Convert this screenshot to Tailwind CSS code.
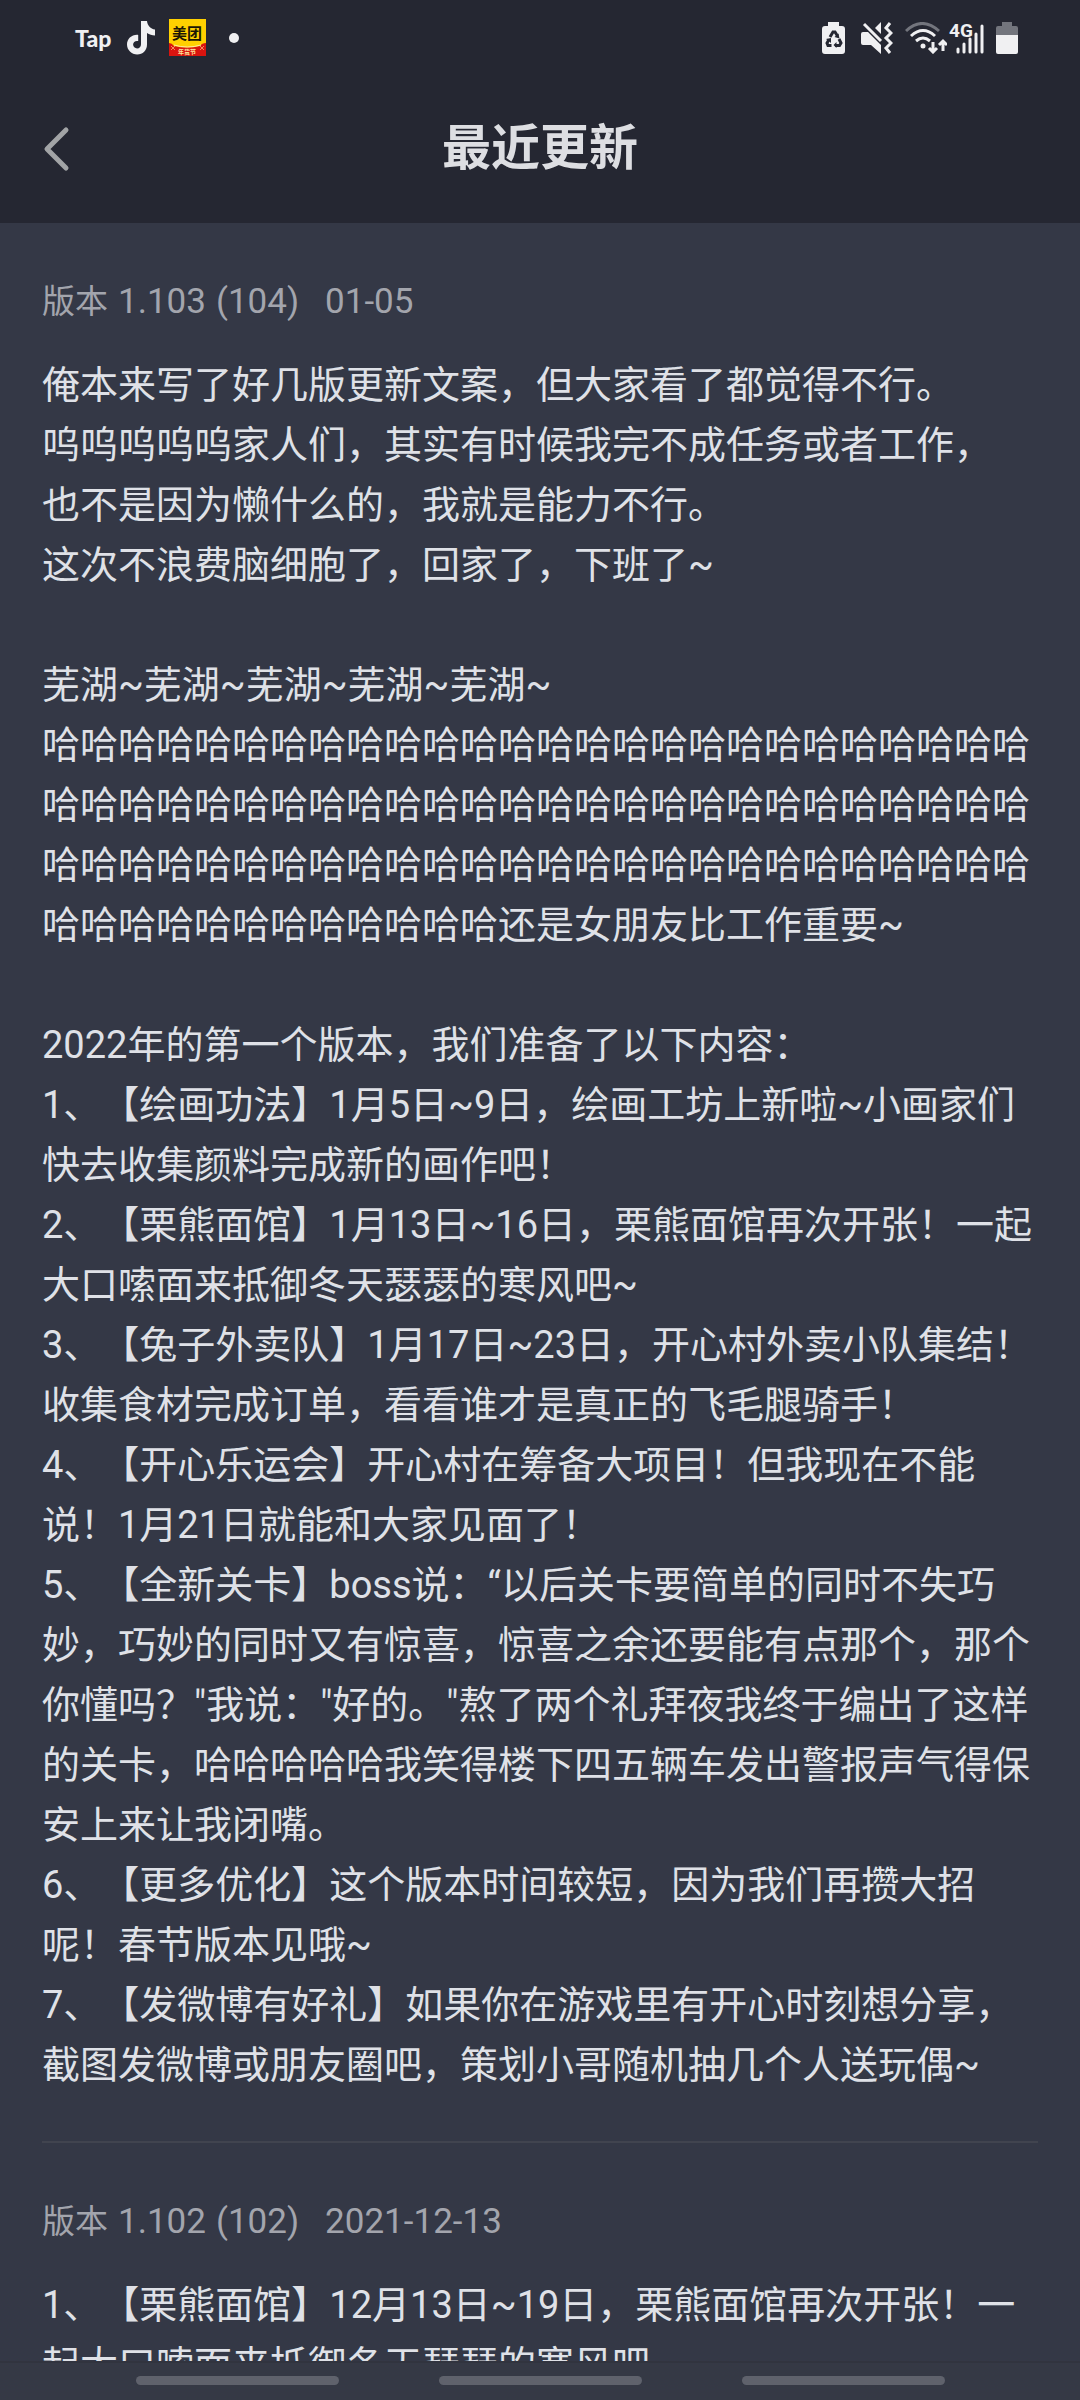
<!DOCTYPE html>
<html lang="zh-CN">
<head>
    <meta charset="UTF-8">
    <meta name="viewport" content="width=device-width, initial-scale=1.0">
    <title>最近更新</title>
    <script src="https://cdn.jsdelivr.net/npm/@tailwindcss/browser@4"></script>
</head>
<body class="bg-[#343846] font-['Roboto','Noto_Sans_CJK_SC',sans-serif] [text-spacing-trim:space-all]">
    <div class="flex flex-col h-screen overflow-hidden">

        <!-- status bar -->
        <div class="flex justify-between items-center shrink-0 h-[75px] pl-[75px] pr-[62px] bg-[#252732] text-[#f0f0f2]">
            <div class="flex items-center">
                <span class="w-[52px] text-[23px] leading-6 font-black font-['Lato',sans-serif]">Tap</span>
                <svg class="w-7 h-[34px]" viewBox="0 0 28 34" fill="currentColor">
                    <path d="M14 0h6c.5 4.500 3.500 8 8 8.500v6c-3 0-5.700-1-8-2.500v11.500C20 29.500 15.800 33.500 10.200 33.500S0 29.200 0 23.600c0-5.900 4.900-10.300 11.200-9.700v6.200c-2.700-.7-5.100.9-5.100 3.500 0 2.200 1.800 3.900 4 3.900 2.300 0 3.900-1.700 3.900-4.200z"/>
                </svg>
                <svg class="w-[37px] h-[37px] ml-[14px]" viewBox="0 0 37 37">
                    <rect width="37" height="37" fill="#ffd000"/>
                    <path d="M0 24q3 0 5 3q13 3 26 0q2-3 6-3v13H0z" fill="#d9140f"/>
                    <path d="M2 27l4 4M6 27l-4 4M35 27l-4 4M31 27l4 4" stroke="#f58a5a" stroke-width="1"/>
                    <path d="M5 26q13 4 27 0" fill="none" stroke="#ffe9a0" stroke-width="1"/>
                    <text x="18" y="20" text-anchor="middle" font-size="15" font-weight="700" fill="#1c1605">美团</text>
                    <text x="18" y="35" text-anchor="middle" font-size="6" font-weight="700" fill="#ffe9a0">年货节</text>
                </svg>
                <span class="w-[10px] h-[10px] ml-[23px] rounded-full bg-[#f0f0f2]"></span>
            </div>
            <div class="flex items-center">
                <svg class="w-6 h-8" viewBox="0 0 24 32" fill="currentColor">
                    <path d="M6 0h11v4h3a3 3 0 0 1 3 3v22a3 3 0 0 1-3 3H3a3 3 0 0 1-3-3V7a3 3 0 0 1 3-3h3z"/>
                    <g fill="none" stroke="#252732" stroke-width="3">
                        <path d="M8 15l3-5h2l2.500 4M17 17l2 4-1.500 2.500H13M9.500 23.500H6L5 21l2-3.500"/>
                    </g>
                    <path d="M16.500 11.500l1 5-5-1.500zM14.500 20v6l-3-3zM4 17l5-1v5z" fill="#252732"/>
                </svg>
                <svg class="w-8 h-8 ml-[15px]" viewBox="0 0 32 32" fill="currentColor">
                    <path d="M0 12a2 2 0 0 1 2-2h5l13 13v9l-10-9H2a2 2 0 0 1-2-2z"/>
                    <path d="M3 2l17 17" stroke="currentColor" stroke-width="3"/>
                    <path d="M20 0v12l-6-6z"/>
                    <path d="M29 1l-4 5 5 5-5 5 5 5-5 5 4 5" fill="none" stroke="currentColor" stroke-width="3"/>
                </svg>
                <svg class="w-[42px] h-8 ml-3" viewBox="0 0 42 32" fill="none" stroke="currentColor" stroke-width="3">
                    <path d="M1 9q16-15 33 0" stroke="#73757d"/>
                    <path d="M6 14q12-11 24 0M11 19q7-6 14 0"/>
                    <circle cx="18" cy="24" r="2.500" fill="currentColor" stroke="none"/>
                    <path d="M28 20v9M24 26l4 4 4-4M38 29V19M34 23l4-4 4 4"/>
                </svg>
                <svg class="w-[38px] h-8 ml-[1px] overflow-visible" viewBox="0 0 38 32" fill="none" stroke="currentColor" stroke-width="3" stroke-linecap="round">
                    <path d="M10 27v3M16 22v8M22 17v13M28 12v18M34 4v26"/>
                    <text x="1" y="15" font-size="19" font-weight="700" fill="currentColor" stroke="none">4G</text>
                </svg>
                <svg class="w-[22px] h-8 ml-[10px]" viewBox="0 0 22 32">
                    <path d="M6 0h10v4h4a2 2 0 0 1 2 2v8H0V6a2 2 0 0 1 2-2h4z" fill="#73757d"/>
                    <path d="M0 13h22v17a2 2 0 0 1-2 2H2a2 2 0 0 1-2-2z" fill="currentColor"/>
                </svg>
            </div>
        </div>

        <header class="grid grid-cols-[1fr_auto_1fr] items-center shrink-0 h-[148px] px-[42px] bg-[#252732]">
            <button class="w-12 h-12 text-[#a2a4a6]" aria-label="返回">
                <svg class="w-[29px] h-12" viewBox="0 0 29 48" fill="none" stroke="currentColor" stroke-width="5" stroke-linecap="round" stroke-linejoin="round">
                    <path d="M24 5L5 24l19 19"/>
                </svg>
            </button>
            <h1 class="text-[49px] leading-[60px] font-bold text-[#dddee2]">最近更新</h1>
        </header>

        <main class="flex-1 min-h-0 overflow-hidden px-[42px] text-[#dfe1e7]">
            <article class="pt-[58px] pb-[46px] border-b-2 border-[#41444f]">
                <h2 class="flex items-baseline gap-[10px] text-[35px] leading-[42px] text-[#a3a5ad]">
                    <span class="text-[33px]">版本</span>
                    <span>1.103</span>
                    <span>(104)</span>
                    <span class="ml-4">01-05</span>
                </h2>
                <div class="mt-8 text-[38px] leading-[60px]">
                    <p>俺本来写了好几版更新文案，但大家看了都觉得不行。</p>
                    <p>呜呜呜呜呜家人们，其实有时候我完不成任务或者工作，</p>
                    <p>也不是因为懒什么的，我就是能力不行。</p>
                    <p>这次不浪费脑细胞了，回家了，下班了~</p>
                    <br>
                    <p>芜湖~芜湖~芜湖~芜湖~芜湖~</p>
                    <p>哈哈哈哈哈哈哈哈哈哈哈哈哈哈哈哈哈哈哈哈哈哈哈哈哈哈哈哈哈哈哈哈哈哈哈哈哈哈哈哈哈哈哈哈哈哈哈哈哈哈哈哈哈哈哈哈哈哈哈哈哈哈哈哈哈哈哈哈哈哈哈哈哈哈哈哈哈哈哈哈哈哈哈哈哈哈哈哈哈哈还是女朋友比工作重要~</p>
                    <br>
                    <p>2022年的第一个版本，我们准备了以下内容：</p>
                    <p>1、【绘画功法】1月5日~9日，绘画工坊上新啦~小画家们快去收集颜料完成新的画作吧！</p>
                    <p>2、【栗熊面馆】1月13日~16日，栗熊面馆再次开张！一起大口嗦面来抵御冬天瑟瑟的寒风吧~</p>
                    <p>3、【兔子外卖队】1月17日~23日，开心村外卖小队集结！收集食材完成订单，看看谁才是真正的飞毛腿骑手！</p>
                    <p>4、【开心乐运会】开心村在筹备大项目！但我现在不能说！1月21日就能和大家见面了！</p>
                    <p>5、【全新关卡】boss说：“以后关卡要简单的同时不失巧妙，巧妙的同时又有惊喜，惊喜之余还要能有点那个，那个你懂吗？"我说："好的。"熬了两个礼拜夜我终于编出了这样的关卡，哈哈哈哈哈我笑得楼下四五辆车发出警报声气得保安上来让我闭嘴。</p>
                    <p>6、【更多优化】这个版本时间较短，因为我们再攒大招呢！春节版本见哦~</p>
                    <p>7、【发微博有好礼】如果你在游戏里有开心时刻想分享，截图发微博或朋友圈吧，策划小哥随机抽几个人送玩偶~</p>
                </div>
            </article>
            <article class="pt-[58px]">
                <h2 class="flex items-baseline gap-[10px] text-[35px] leading-[42px] text-[#a3a5ad]">
                    <span class="text-[33px]">版本</span>
                    <span>1.102</span>
                    <span>(102)</span>
                    <span class="ml-4">2021-12-13</span>
                </h2>
                <div class="mt-8 text-[38px] leading-[60px]">
                    <p>1、【栗熊面馆】12月13日~19日，栗熊面馆再次开张！一起大口嗦面来抵御冬天瑟瑟的寒风吧</p>
                </div>
            </article>
        </main>

        <!-- gesture hints -->
        <nav class="flex justify-center shrink-0 gap-[100px] h-[39px] pt-[13px] border-t-2 border-[#31343f] bg-[#353945]">
            <span class="w-[203px] h-[9px] rounded-full bg-[#5f626c]"></span>
            <span class="w-[203px] h-[9px] rounded-full bg-[#5f626c]"></span>
            <span class="w-[203px] h-[9px] rounded-full bg-[#5f626c]"></span>
        </nav>
    </div>
</body>
</html>
